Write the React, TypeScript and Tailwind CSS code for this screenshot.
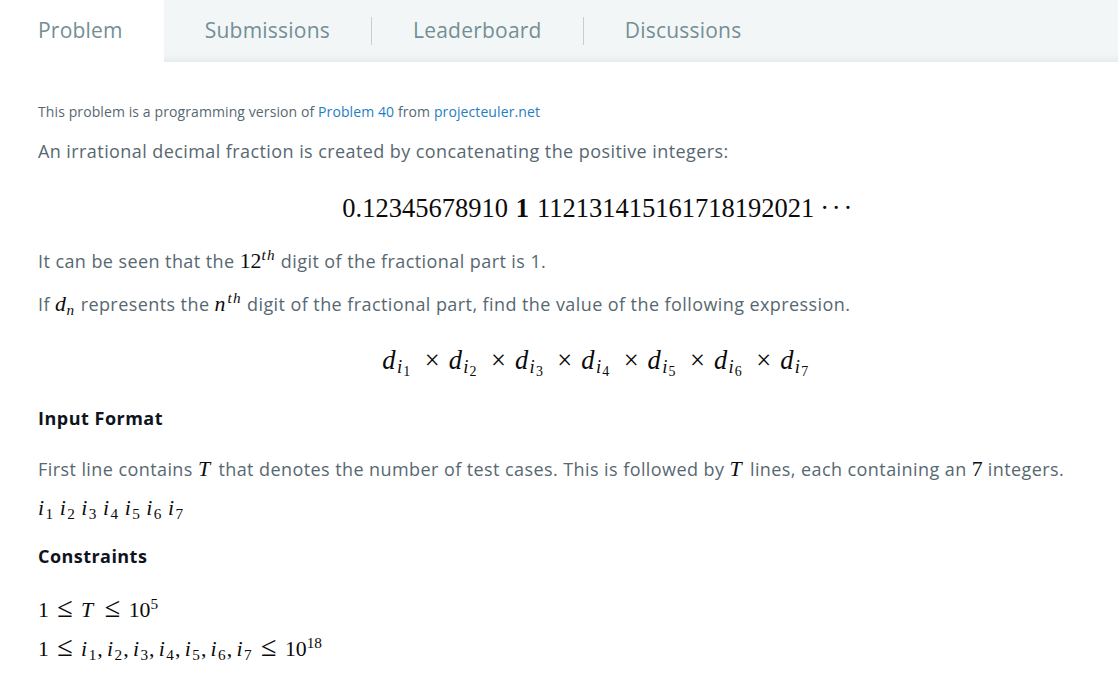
import React from "react";

type C = { children: React.ReactNode; className?: string };

const M: React.FC<C> = ({ children, className }) => (
  <span
    className={
      "text-[21.8px] tracking-normal text-[#0b0b0b] whitespace-nowrap [font-family:'Liberation_Serif',serif] " +
      (className || "")
    }
  >
    {children}
  </span>
);

// glyph with fixed advance (to emulate Computer Modern metrics)
const G: React.FC<{ w: string; children: React.ReactNode; it?: boolean; center?: boolean }> = ({ w, children, it, center }) => (
  <span className={"inline-block " + (it ? "italic " : "") + (center ? "text-center " : "")} style={{ width: w }}>
    {children}
  </span>
);

const Sub: React.FC<C> = ({ children }) => (
  <span className="relative top-[0.24em] text-[0.7em] leading-none">{children}</span>
);
const Sup: React.FC<C> = ({ children }) => (
  <span className="relative -top-[0.55em] text-[0.7em] leading-none">{children}</span>
);

const Ii: React.FC<{ n: number }> = ({ n }) => (
  <span className="inline-block pr-[0.05em]">
    <G w="0.345em" it>
      i
    </G>
    <Sub>{n}</Sub>
  </span>
);

const Di: React.FC<{ n: number }> = ({ n }) => (
  <span className="inline-block pr-[0.22em]">
    <G w="0.52em" it>
      d
    </G>
    <span className="relative top-[0.2em] text-[0.7em] leading-none">
      <G w="0.4em" it>
        i
      </G>
      <span className="relative top-[0.25em] text-[0.75em] leading-none">{n}</span>
    </span>
  </span>
);

const Times = () => <span className="inline-block w-[0.778em] mx-[0.222em] text-center">×</span>;
const Le = () => (
  <span className="inline-block w-[0.778em] mx-[0.35em] text-center">
    <span className="text-[1.3em] leading-none">≤</span>
  </span>
);
const Comma = () => <span className="inline-block w-[0.278em] mr-[0.167em]">,</span>;
const Gap = () => <span className="inline-block w-[0.25em]" />;
const Dot = () => <span className="inline-block w-[0.44em] text-center">·</span>;

const Tab: React.FC<{ label: string; active?: boolean; sep?: boolean }> = ({ label, active, sep }) => (
  <div className="flex items-center h-full">
    <div className={"h-full flex items-center " + (active ? "bg-white pl-[38px] pr-[41px]" : "px-[41px]")}>
      <span className="text-[21px] tracking-[0.22px] text-[#738f95]">{label}</span>
    </div>
    {sep && <div className="w-px h-[28px] bg-[#c5ced2]" />}
  </div>
);

export default function App() {
  return (
    <div className="w-[1118px] h-[679px] bg-white overflow-hidden [font-family:'Open_Sans',sans-serif]">
      <div className="h-[62px] flex bg-[#f3f6f7] shadow-[inset_0_-9px_9px_-7px_rgba(0,0,0,0.07)]">
        <Tab label="Problem" active />
        <Tab label="Submissions" sep />
        <Tab label="Leaderboard" sep />
        <Tab label="Discussions" />
      </div>
      <div className="pl-[38px] w-[1158px] text-[#576871]">
        <div className="mt-[40px] text-[14px] leading-[20px] tracking-[0.1px]">
          This problem is a programming version of <span className="text-[#1f7ec4]">Problem 40</span> from{" "}
          <span className="text-[#1f7ec4]">projecteuler.net</span>
        </div>
        <div className="mt-[16px] text-[18px] leading-[27px] tracking-[0.42px]">
          An irrational decimal fraction is created by concatenating the positive integers:
        </div>
        <div className="mt-[28px] h-[30px] leading-[30px] text-center">
          <M className="text-[26.5px]">
            0.12345678910<span className="inline-block w-[0.3em]" />
            <b>1</b>
            <span className="inline-block w-[0.3em]" />
            112131415161718192021<span className="inline-block w-[0.17em]" />
            <Dot />
            <Dot />
            <Dot />
          </M>
        </div>
        <div className="mt-[25px] text-[18px] leading-[27px] tracking-[0.42px]">
          It can be seen that the{" "}
          <M>
            12
            <Sup>
              <G w="0.361em" it>
                t
              </G>
              <G w="0.576em" it>
                h
              </G>
            </Sup>
          </M>{" "}
          digit of the fractional part is 1.
        </div>
        <div className="mt-[16px] text-[18px] leading-[27px] tracking-[0.42px]">
          If{" "}
          <M>
            <G w="0.52em" it>
              d
            </G>
            <Sub>
              <G w="0.6em" it>
                n
              </G>
            </Sub>
          </M>{" "}
          represents the{" "}
          <M>
            <G w="0.6em" it>
              n
            </G>
            <Sup>
              <G w="0.361em" it>
                t
              </G>
              <G w="0.576em" it>
                h
              </G>
            </Sup>
          </M>{" "}
          digit of the fractional part, find the value of the following expression.
        </div>
        <div className="mt-[27px] h-[30px] leading-[30px] text-center">
          <M className="text-[26.5px]">
            <Di n={1} />
            <Times />
            <Di n={2} />
            <Times />
            <Di n={3} />
            <Times />
            <Di n={4} />
            <Times />
            <Di n={5} />
            <Times />
            <Di n={6} />
            <Times />
            <Di n={7} />
          </M>
        </div>
        <div className="mt-[30px] text-[18px] leading-[27px] tracking-[0.5px] font-bold text-[#0e141e]">Input Format</div>
        <div className="mt-[24px] text-[18px] leading-[27px] tracking-[0.42px]">
          First line contains{" "}
          <M>
            <G w="0.704em" it>
              T
            </G>
          </M>{" "}
          that denotes the number of test cases. This is followed by{" "}
          <M>
            <G w="0.704em" it>
              T
            </G>
          </M>{" "}
          lines, each containing an <M>7</M> integers.
        </div>
        <div className="mt-[12px] text-[18px] leading-[27px]">
          <M>
            <Ii n={1} />
            <Gap />
            <Ii n={2} />
            <Gap />
            <Ii n={3} />
            <Gap />
            <Ii n={4} />
            <Gap />
            <Ii n={5} />
            <Gap />
            <Ii n={6} />
            <Gap />
            <Ii n={7} />
          </M>
        </div>
        <div className="mt-[21px] text-[18px] leading-[27px] tracking-[0.45px] font-bold text-[#0e141e]">Constraints</div>
        <div className="mt-[24px] text-[18px] leading-[27px]">
          <M>
            1<Le />
            <G w="0.704em" it>
              T
            </G>
            <Le />
            10<Sup>5</Sup>
          </M>
        </div>
        <div className="mt-[9px] text-[18px] leading-[27px]">
          <M>
            1<Le />
            <Ii n={1} />
            <Comma />
            <Ii n={2} />
            <Comma />
            <Ii n={3} />
            <Comma />
            <Ii n={4} />
            <Comma />
            <Ii n={5} />
            <Comma />
            <Ii n={6} />
            <Comma />
            <Ii n={7} />
            <Le />
            10<Sup>18</Sup>
          </M>
        </div>
      </div>
    </div>
  );
}
